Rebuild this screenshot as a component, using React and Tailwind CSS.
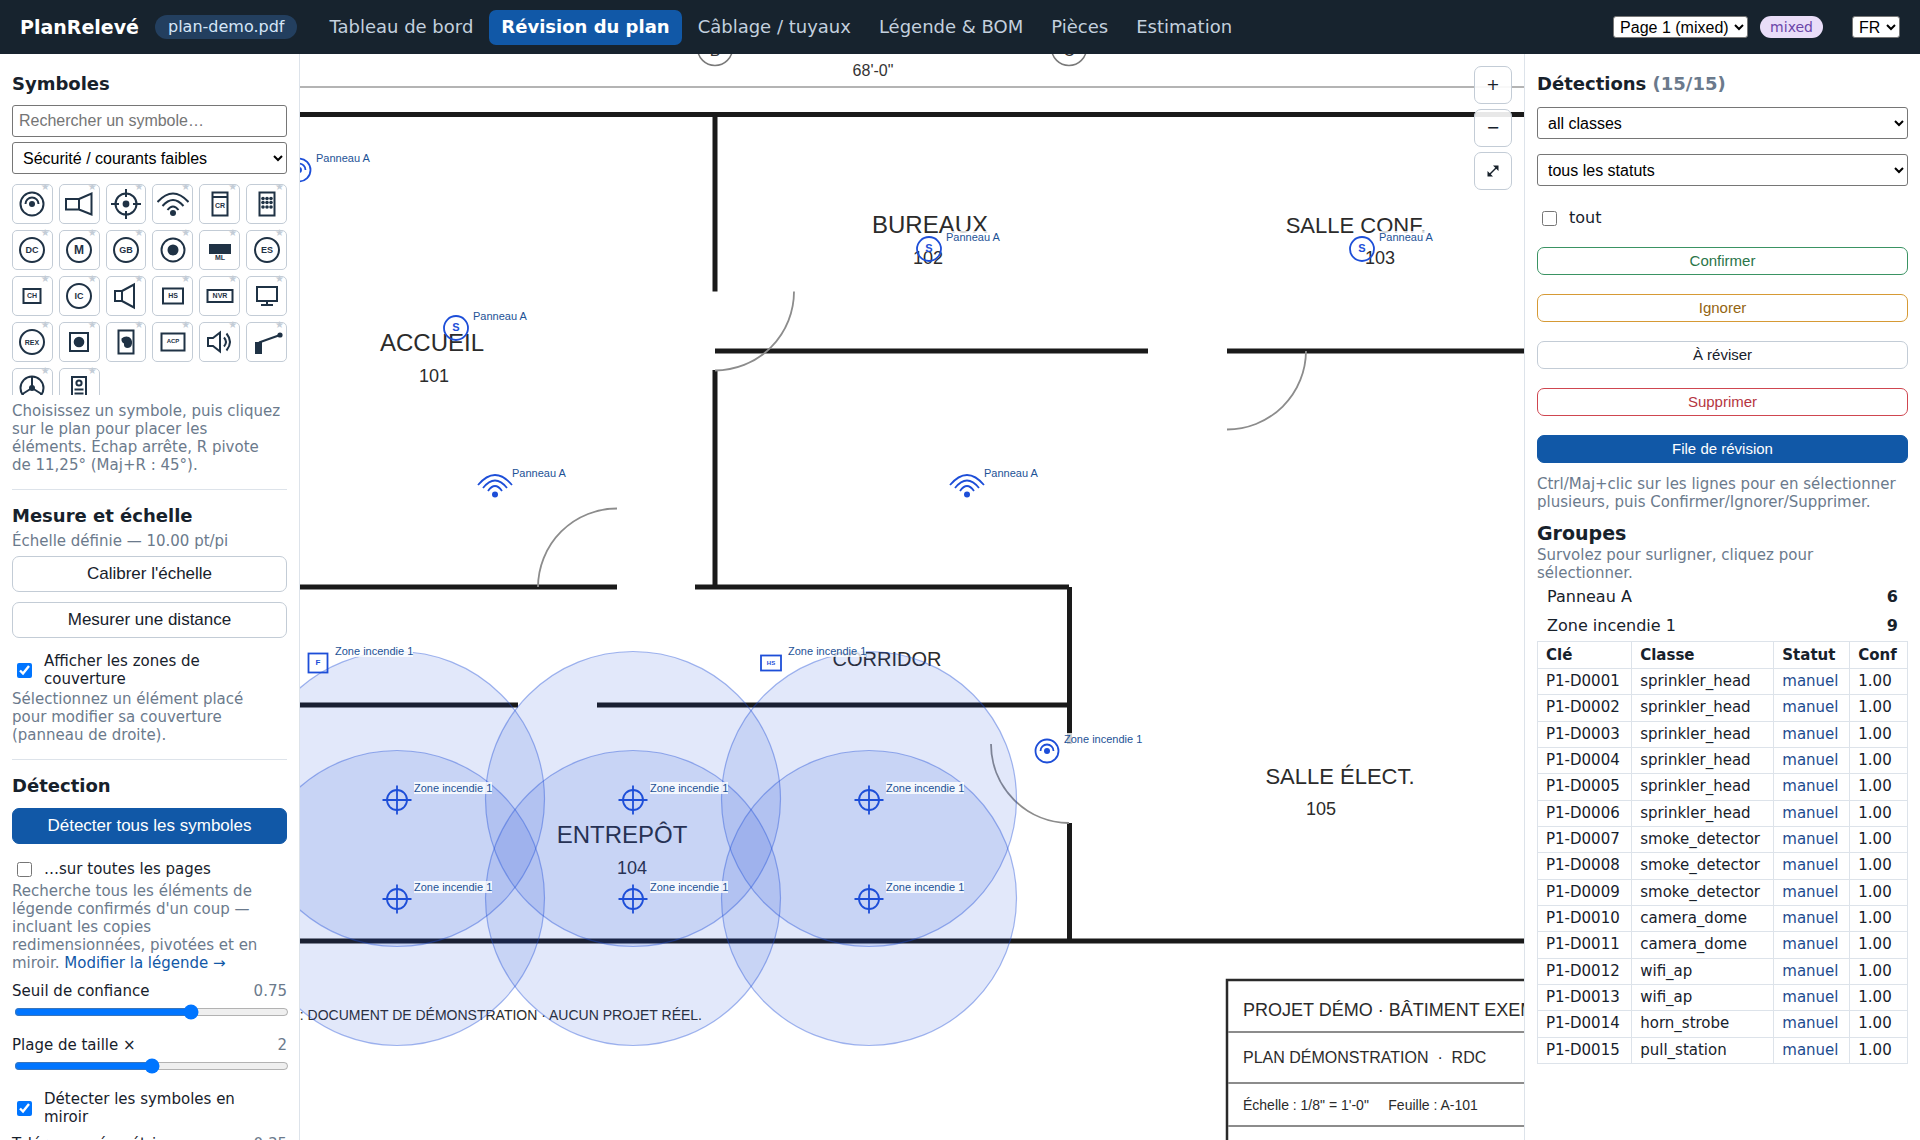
import React, { useState } from 'react';
import clsx from 'clsx';

const NAV = ['Tableau de bord', 'Révision du plan', 'Câblage / tuyaux', 'Légende & BOM', 'Pièces', 'Estimation'];

const DETECTIONS = [
  'sprinkler_head',
  'sprinkler_head',
  'sprinkler_head',
  'sprinkler_head',
  'sprinkler_head',
  'sprinkler_head',
  'smoke_detector',
  'smoke_detector',
  'smoke_detector',
  'camera_dome',
  'camera_dome',
  'wifi_ap',
  'wifi_ap',
  'horn_strobe',
  'pull_station',
];

const INK = '#1f3245';
const BLUE = '#1d4ed8';

/* ---------- symbol drawings, all centred on 0,0 ---------- */

const Letters = ({ size, y = 0, children }) => (
  <text
    y={y + size * 0.36}
    textAnchor="middle"
    fontSize={size}
    fontWeight="700"
    fontFamily="Liberation Sans, Arial, sans-serif"
    fill="currentColor"
    stroke="none"
  >
    {children}
  </text>
);

const Round = ({ size = 9, children }) => (
  <>
    <circle r="12" />
    <Letters size={size}>{children}</Letters>
  </>
);

const Boxed = ({ w, h, size = 7, children }) => (
  <>
    <rect x={-w / 2} y={-h / 2} width={w} height={h} />
    <Letters size={size} y={-0.5}>{children}</Letters>
  </>
);

const Dot = ({ x = 0, y = 0, r = 3 }) => <circle cx={x} cy={y} r={r} fill="currentColor" stroke="none" />;

const CameraDome = () => (
  <>
    <circle r="11.5" />
    <path d="M-6.5 0A6.5 6.5 0 0 1 6.5 0" />
    <Dot />
  </>
);

const Wifi = () => (
  <>
    <path d="M-15.5 -2Q0 -19 15.5 -2M-10.5 2Q0 -10 10.5 2M-5.5 6Q0 -1 5.5 6" />
    <Dot y={9} />
  </>
);

const SYMBOLS = [
  { id: 'camera_dome', draw: <CameraDome /> },
  { id: 'camera_bullet', draw: <path d="M-13 -5H0V5.5H-13ZM0 -5L12.5 -10.5V10.5L0 5.5" /> },
  {
    id: 'ptz',
    draw: (
      <>
        <circle r="10.5" />
        <path d="M-15 0H-7M7 0H15M0 -15V-7M0 7V15" />
        <Dot r={3.4} />
      </>
    ),
  },
  { id: 'wifi_ap', draw: <Wifi /> },
  {
    id: 'card_reader',
    draw: (
      <>
        <path d="M-7.5 -11.5H7.5V11.5H-7.5ZM-7.5 -7H7.5" />
        <Letters size={7} y={1}>CR</Letters>
      </>
    ),
  },
  {
    id: 'keypad',
    draw: (
      <>
        <rect x="-7.5" y="-11.5" width="15" height="23" />
        {[-5.5, -1.5, 3].map(y => [-4, 0, 4].map(x => <Dot key={`${x}${y}`} x={x} y={y} r={1.8} />))}
      </>
    ),
  },
  { id: 'door_contact', draw: <Round>DC</Round> },
  { id: 'motion', draw: <Round size={12}>M</Round> },
  { id: 'glass_break', draw: <Round>GB</Round> },
  { id: 'button', draw: <><circle r="11.5" /><Dot r={5.5} /></> },
  {
    id: 'mag_lock',
    draw: (
      <>
        <rect x="-10" y="-5" width="20" height="8" fill="currentColor" />
        <Letters size={7} y={7}>ML</Letters>
      </>
    ),
  },
  { id: 'electric_strike', draw: <Round>ES</Round> },
  { id: 'chime', draw: <Boxed w={17} h={14}>CH</Boxed> },
  { id: 'intercom', draw: <Round>IC</Round> },
  { id: 'speaker', draw: <path d="M-11 -5H-4V5H-11ZM-4 -5L8 -11.5V11.5L-4 5" /> },
  { id: 'horn_strobe', draw: <Boxed w={20} h={15}>HS</Boxed> },
  { id: 'nvr', draw: <Boxed w={25} h={12}>NVR</Boxed> },
  { id: 'monitor', draw: <path d="M-10 -9H10V5H-10ZM0 5V9M-6 9H6" /> },
  { id: 'rex', draw: <Round size={7}>REX</Round> },
  { id: 'push_exit', draw: <><rect x="-9" y="-9" width="18" height="18" /><Dot r={5.3} /></> },
  {
    id: 'biometric',
    draw: (
      <>
        <rect x="-7.5" y="-11.5" width="15" height="23" />
        <path d="M-4.5 -3.5Q-1 -6.5 3 -5Q6.5 -3 6 1.5Q5.5 6 1 6Q-2.5 5.5 -2 1.5Q-5 0 -4.5 -3.5Z" fill="currentColor" stroke="none" />
      </>
    ),
  },
  {
    id: 'acp',
    draw: (
      <>
        <rect x="-11.5" y="-8.5" width="23" height="17" />
        <Letters size={6} y={-1.5}>ACP</Letters>
      </>
    ),
  },
  { id: 'volume', draw: <path d="M-12 -4H-7L0 -9.5V9.5L-7 4H-12ZM4 -4.5Q8 0 4 4.5M6.5 -8.5Q13.5 0 6.5 8.5" /> },
  {
    id: 'door_arm',
    draw: (
      <>
        <rect x="-11" y="1" width="5" height="10" fill="currentColor" />
        <path d="M-8 0.5L13 -7" />
        <Dot x={13} y={-7} r={2.6} />
      </>
    ),
  },
  {
    id: 'turnstile',
    draw: (
      <>
        <circle r="11.5" />
        <path d="M0 0V-11.5M0 0L-9.5 6M0 0L9.5 6" />
        <Dot r={3} />
      </>
    ),
  },
  {
    id: 'door_station',
    draw: (
      <>
        <rect x="-7" y="-11" width="14" height="24" />
        <circle cy="-5" r="2.6" />
        <path d="M-4.5 1.5H4.5M-4.5 5.5H4.5" />
      </>
    ),
  },
];

/* ---------- plan content ---------- */

const COVERAGE_X = [397, 633, 869];
const COVERAGE_Y = [799, 898];

const ROOMS = [
  { name: 'ACCUEIL', size: 24, x: 432, y: 351, no: '101', nx: 434, ny: 382 },
  { name: 'BUREAUX', size: 24, x: 930, y: 233, no: '102', nx: 928, ny: 264 },
  { name: 'SALLE CONF.', size: 22, x: 1356, y: 233, no: '103', nx: 1380, ny: 264 },
  { name: 'ENTREPÔT', size: 24, x: 622, y: 843, no: '104', nx: 632, ny: 874 },
  { name: 'SALLE ÉLECT.', size: 22, x: 1340, y: 784, no: '105', nx: 1321, ny: 815 },
];

const Smoke = () => (
  <>
    <circle r="12" />
    <Letters size={11} y={-1}>S</Letters>
  </>
);

const Sprinkler = () => (
  <>
    <circle r="10" />
    <path d="M-14.5 0H14.5M0 -14.5V14.5" />
  </>
);

const MapWifi = () => (
  <>
    <path d="M-17 0Q0 -20 17 0M-12 3Q0 -12 12 3M-7 6Q0 -4 7 6" />
    <Dot y={9.5} />
  </>
);

const PANEL = 'Panneau A';
const ZONE = 'Zone incendie 1';

const ITEMS = [
  { x: 299, y: 170, group: PANEL, draw: <CameraDome /> },
  { x: 456, y: 328, group: PANEL, draw: <Smoke /> },
  { x: 929, y: 249, group: PANEL, draw: <Smoke /> },
  { x: 1362, y: 249, group: PANEL, draw: <Smoke /> },
  { x: 495, y: 485, group: PANEL, draw: <MapWifi /> },
  { x: 967, y: 485, group: PANEL, draw: <MapWifi /> },
  { x: 318, y: 663, group: ZONE, draw: <Boxed w={19} h={19} size={8}>F</Boxed> },
  { x: 771, y: 663, group: ZONE, draw: <Boxed w={20} h={15} size={6}>HS</Boxed> },
  { x: 1047, y: 751, group: ZONE, draw: <CameraDome /> },
  ...[397, 633, 869].flatMap(x => [800, 899].map(y => ({ x, y, group: ZONE, draw: <Sprinkler /> }))),
];

const PlanView = () => (
  <svg className="absolute inset-0 h-full w-full" fontFamily="Liberation Sans, Arial, sans-serif">
    <g transform="translate(-300 -54)">
      {/* grid bubbles and dimension line */}
      <g fill="none" stroke="#7a7a7a" strokeWidth="1.5">
        <circle cx="715" cy="48" r="17.5" />
        <circle cx="1069" cy="48" r="17.5" />
      </g>
      <path d="M300 87H2000" stroke="#b4b4b4" strokeWidth="2" />
      <g fill="#333" textAnchor="middle" fontSize="16">
        <text x="715" y="56">B</text>
        <text x="1069" y="56">C</text>
        <text x="873" y="76">68'-0"</text>
      </g>

      {/* walls */}
      <path
        d="M300 114.5H2000M715 114.5V291.5M715 370V587M715 351H1148M1227 351H2000M300 587H617M695 587H1069M1069.5 587V744M1069.5 823V941M300 705H518M597 705H1069M300 941H2000"
        fill="none"
        stroke="#1a1a1a"
        strokeWidth="5"
      />
      {/* door swings */}
      <path
        d="M794 291.5A79 79 0 0 1 715 370.5M1306 351A79 79 0 0 1 1227 429.5M538 587A79 79 0 0 1 617 508.5M991 744A79 79 0 0 0 1069 823"
        fill="none"
        stroke="#8c8c8c"
        strokeWidth="1.8"
      />

      {/* title block */}
      <path d="M1227 1200V980H2000" fill="none" stroke="#2a2a2a" strokeWidth="2.5" />
      <path d="M1228 1032H2000M1228 1083H2000M1228 1126H2000" stroke="#8c8c8c" strokeWidth="1.8" />
      <g fill="#2b2b2b">
        <text x="1243" y="1016" fontSize="18">PROJET DÉMO · BÂTIMENT EXEMPLE</text>
        <text x="1243" y="1063" fontSize="16">{'PLAN DÉMONSTRATION \u00a0·\u00a0 RDC'}</text>
        <text x="1243" y="1110" fontSize="14">{'Échelle : 1/8" = 1\'-0" \u00a0 \u00a0 Feuille : A-101'}</text>
        <text x="702" y="1020" fontSize="14" textAnchor="end">NOTE : DOCUMENT DE DÉMONSTRATION · AUCUN PROJET RÉEL.</text>
      </g>

      <g fill="#2b2b2b" textAnchor="middle">
        {ROOMS.map(room => (
          <React.Fragment key={room.no}>
            <text x={room.x} y={room.y} fontSize={room.size}>{room.name}</text>
            <text x={room.nx} y={room.ny} fontSize="18">{room.no}</text>
          </React.Fragment>
        ))}
        <text x="887" y="666" fontSize="20">CORRIDOR</text>
      </g>

      {/* sprinkler coverage */}
      {COVERAGE_X.map(cx =>
        COVERAGE_Y.map(cy => (
          <circle key={`${cx}-${cy}`} cx={cx} cy={cy} r="147.5" fill={BLUE} fillOpacity="0.13" stroke={BLUE} strokeOpacity="0.4" strokeWidth="1.2" />
        ))
      )}

      {/* placed items */}
      {ITEMS.map(item => (
        <g key={`${item.x}-${item.y}`} transform={`translate(${item.x} ${item.y})`}>
          <g fill="none" stroke={BLUE} strokeWidth="1.8" color={BLUE}>{item.draw}</g>
          <rect x="17" y="-18" width={item.group === PANEL ? 56 : 78} height="12" fill="#fff" fillOpacity="0.8" />
          <text x="17" y="-8" fontSize="11" fill="#1d5296">{item.group}</text>
        </g>
      ))}
    </g>
  </svg>
);

const ZoomControls = () => {
  const style = 'flex size-[38px] items-center justify-center rounded-[7px] border border-[#c3ccd6] bg-white/90 text-base';

  return (
    <div className="absolute top-3 right-3 flex flex-col gap-[5px]">
      <button type="button" className={style}>+</button>
      <button type="button" className={style}>−</button>
      <button type="button" aria-label="Ajuster" className={style}>
        <svg width="12" height="12" viewBox="0 0 12 12">
          <path d="M2.5 9.5L9.5 2.5" stroke="currentColor" strokeWidth="1.5" />
          <path d="M6 0.5H11.5V6ZM0.500 6V11.5H6Z" fill="currentColor" />
        </svg>
      </button>
    </div>
  );
};

/* ---------- form pieces ---------- */

const Hint = ({ className, children }) => (
  <p className={clsx('text-[15px] leading-[18px] text-[#6b7a8c]', className)}>{children}</p>
);

const Check = ({ label, checked, className }) => (
  <label className={clsx('flex items-center gap-3 pr-5 pl-[5px] text-[15px] leading-[18px]', className)}>
    <input type="checkbox" defaultChecked={checked} className="size-[15px] shrink-0" />
    <span>{label}</span>
  </label>
);

const Slider = ({ id, label, value, shown, min, max }) => (
  <div className="mb-4">
    <div className="flex justify-between text-[15px] leading-[18px]">
      <label htmlFor={id}>{label}</label>
      <output htmlFor={id} className="text-[#6b7a8c]">{shown}</output>
    </div>
    <input id={id} type="range" min={min} max={max} step="0.01" defaultValue={value} className="mt-1 ml-[2px] block h-4 w-full" />
  </div>
);

const PanelButton = ({ primary, className, children }) => (
  <button
    type="button"
    className={clsx(
      'block h-9 w-full rounded-[7px] border font-[Liberation_Sans,Arial,sans-serif] text-[17px]',
      primary ? 'border-[#1158a7] bg-[#1158a7] text-white' : 'border-[#c3ccd6] bg-white',
      className
    )}
  >
    {children}
  </button>
);

const FIELD = 'rounded-[3px] border border-[#767676] bg-white font-[Liberation_Sans,Arial,sans-serif] text-base text-black';

const LeftPanel = () => (
  <aside className="w-[300px] shrink-0 overflow-hidden border-r border-[#dde3ea] bg-white px-3 pt-[19px]">
    <h3 className="text-lg leading-[22px] font-bold">Symboles</h3>
    <input aria-label="Rechercher un symbole" placeholder="Rechercher un symbole…" className={clsx(FIELD, 'mt-[10px] block h-8 w-full px-[6px] placeholder:text-[#757575]')} />
    <select aria-label="Catégorie" className={clsx(FIELD, 'mt-[5px] block h-8 w-full px-[6px]')}>
      <option>Sécurité / courants faibles</option>
    </select>

    <div className="mt-[10px] grid h-[211px] auto-rows-[40px] grid-cols-6 gap-[6px] overflow-hidden">
      {SYMBOLS.map(symbol => (
        <button key={symbol.id} type="button" title={symbol.id} className="relative flex items-center justify-center rounded-[5px] border border-[#c3ccd6] bg-white">
          <svg width="32" height="32" viewBox="-16 -16 32 32" fill="none" stroke={INK} color={INK} strokeWidth="2">
            {symbol.draw}
          </svg>
          <span className="absolute -top-[5px] right-[2px] text-[10px] leading-[14px] text-[#c3ccd6]">★</span>
        </button>
      ))}
    </div>
    <Hint className="mt-[7px]">
      Choisissez un symbole, puis cliquez sur le plan pour placer les
      <br />
      éléments. Échap arrête, R pivote
      <br />
      de 11,25° (Maj+R : 45°).
    </Hint>

    <hr className="mt-[15px] mb-[15px] border-[#dde3ea]" />
    <h3 className="text-lg leading-[22px] font-bold">Mesure et échelle</h3>
    <Hint className="mt-[5px]">Échelle définie — 10.00 pt/pi</Hint>
    <PanelButton className="mt-[6px]">Calibrer l'échelle</PanelButton>
    <PanelButton className="mt-[10px]">Mesurer une distance</PanelButton>
    <Check className="mt-[14px]" checked label="Afficher les zones de couverture" />
    <Hint className="mt-[2px] pr-2">Sélectionnez un élément placé pour modifier sa couverture (panneau de droite).</Hint>

    <hr className="mt-[15px] mb-[15px] border-[#dde3ea]" />
    <h3 className="text-lg leading-[22px] font-bold">Détection</h3>
    <PanelButton primary className="mt-[11px]">Détecter tous les symboles</PanelButton>
    <Check className="mt-[16px]" label="…sur toutes les pages" />
    <Hint className="mt-1 mb-[10px]">
      Recherche tous les éléments de légende confirmés d'un coup — incluant les copies redimensionnées, pivotées et en miroir.{' '}
      <a href="#legende" className="text-[#1158a7]">Modifier la légende →</a>
    </Hint>
    <Slider id="seuil" label="Seuil de confiance" shown="0.75" min="0.3" max="0.99" value="0.75" />
    <Slider id="taille" label="Plage de taille ×" shown="2" min="1" max="3" value="2" />
    <Check checked label="Détecter les symboles en miroir" />
    <div className="mt-[9px]">
      <Slider id="tolerance" label="Tolérance géométrique" shown="0.35" min="0" max="1" value="0.35" />
    </div>
  </aside>
);

const ACTIONS = [
  { label: 'Confirmer', style: 'border-[#3a9363] text-[#2a7549]' },
  { label: 'Ignorer', style: 'border-[#d69a35] text-[#936512]' },
  { label: 'À réviser', style: 'border-[#c3ccd6] text-[#17212b]' },
  { label: 'Supprimer', style: 'border-[#cf4650] text-[#b5363f]' },
  { label: 'File de révision', style: 'border-[#1158a7] bg-[#1158a7] text-white' },
];

const CELL = 'border border-[#dde3ea] px-2 py-1 text-left';

const RightPanel = () => (
  <aside className="w-[396px] shrink-0 overflow-hidden border-l border-[#dde3ea] bg-white px-3 pt-[19px]">
    <h3 className="text-lg leading-[22px] font-bold">
      Détections <span className="text-[#6b7a8c]">(15/15)</span>
    </h3>
    <select aria-label="Classe" className={clsx(FIELD, 'mt-[12px] block h-8 w-full px-[6px]')}>
      <option>all classes</option>
    </select>
    <select aria-label="Statut" className={clsx(FIELD, 'mt-[15px] block h-8 w-full px-[6px]')}>
      <option>tous les statuts</option>
    </select>
    <label className="mt-[23px] flex items-center gap-3 pl-[5px] text-base leading-[18px]">
      <input type="checkbox" className="size-[15px]" />
      tout
    </label>
    <div className="mt-5 flex flex-col gap-[19px]">
      {ACTIONS.map(action => (
        <button key={action.label} type="button" className={clsx('h-7 rounded-[7px] border font-[Liberation_Sans,Arial,sans-serif] text-[15px]', action.style)}>
          {action.label}
        </button>
      ))}
    </div>
    <Hint className="mt-[12px]">Ctrl/Maj+clic sur les lignes pour en sélectionner plusieurs, puis Confirmer/Ignorer/Supprimer.</Hint>

    <h4 className="mt-[11px] text-[19px] leading-[22px] font-bold">Groupes</h4>
    <Hint className="mt-[2px]">Survolez pour surligner, cliquez pour sélectionner.</Hint>
    <ul className="px-[10px] pb-px text-base leading-[29px]">
      <li className="flex justify-between">Panneau A <b>6</b></li>
      <li className="flex justify-between">Zone incendie 1 <b>9</b></li>
    </ul>

    <table className="h-[423px] w-full border-collapse text-[15px] leading-[17px]">
      <thead className="leading-[18px]">
        <tr>
          <th className={CELL}>Clé</th>
          <th className={CELL}>Classe</th>
          <th className={CELL}>Statut</th>
          <th className={CELL}>Conf</th>
        </tr>
      </thead>
      <tbody>
        {DETECTIONS.map((cls, i) => (
          <tr key={i}>
            <td className={CELL}>P1-D{String(i + 1).padStart(4, '0')}</td>
            <td className={CELL}>{cls}</td>
            <td className={clsx(CELL, 'text-[#1d4b8f]')}>manuel</td>
            <td className={CELL}>1.00</td>
          </tr>
        ))}
      </tbody>
    </table>
  </aside>
);

const TOP_SELECT = 'h-[22px] rounded-[3px] border border-[#767676] bg-white px-[2px] font-[Liberation_Sans,Arial,sans-serif] text-base text-black';

const Header = () => {
  const [active, setActive] = useState('Révision du plan');

  return (
    <header className="flex h-[54px] shrink-0 items-center bg-[#17232e] px-5 text-white">
      <h1 className="text-[19px] font-bold">PlanRelevé</h1>
      <span className="ml-4 rounded-full bg-[#233f5f] px-[13px] text-base text-[#d5e6f8]">plan-demo.pdf</span>
      <nav className="ml-5 flex gap-1">
        {NAV.map(item => (
          <button
            key={item}
            type="button"
            onClick={() => setActive(item)}
            className={clsx('h-[35px] rounded-[7px] px-3 text-lg', item === active ? 'bg-[#1158a7] font-bold' : 'text-[#c3d0de]')}
          >
            {item}
          </button>
        ))}
      </nav>
      <select aria-label="Page" className={clsx(TOP_SELECT, 'ml-auto')}>
        <option>Page 1 (mixed)</option>
      </select>
      <span className="ml-3 rounded-full bg-[#e9ddf8] px-[10px] text-sm leading-[22px] text-[#6b46a8]">mixed</span>
      <select aria-label="Langue" className={clsx(TOP_SELECT, 'ml-[29px]')}>
        <option>FR</option>
      </select>
    </header>
  );
};

const App = () => (
  <div className="flex h-screen flex-col overflow-hidden bg-white font-[DejaVu_Sans,sans-serif] text-[#17212b]">
    <Header />
    <div className="flex min-h-0 flex-1">
      <LeftPanel />
      <main className="relative min-w-0 flex-1 overflow-hidden bg-white">
        <PlanView />
        <ZoomControls />
      </main>
      <RightPanel />
    </div>
  </div>
);

export default App;
